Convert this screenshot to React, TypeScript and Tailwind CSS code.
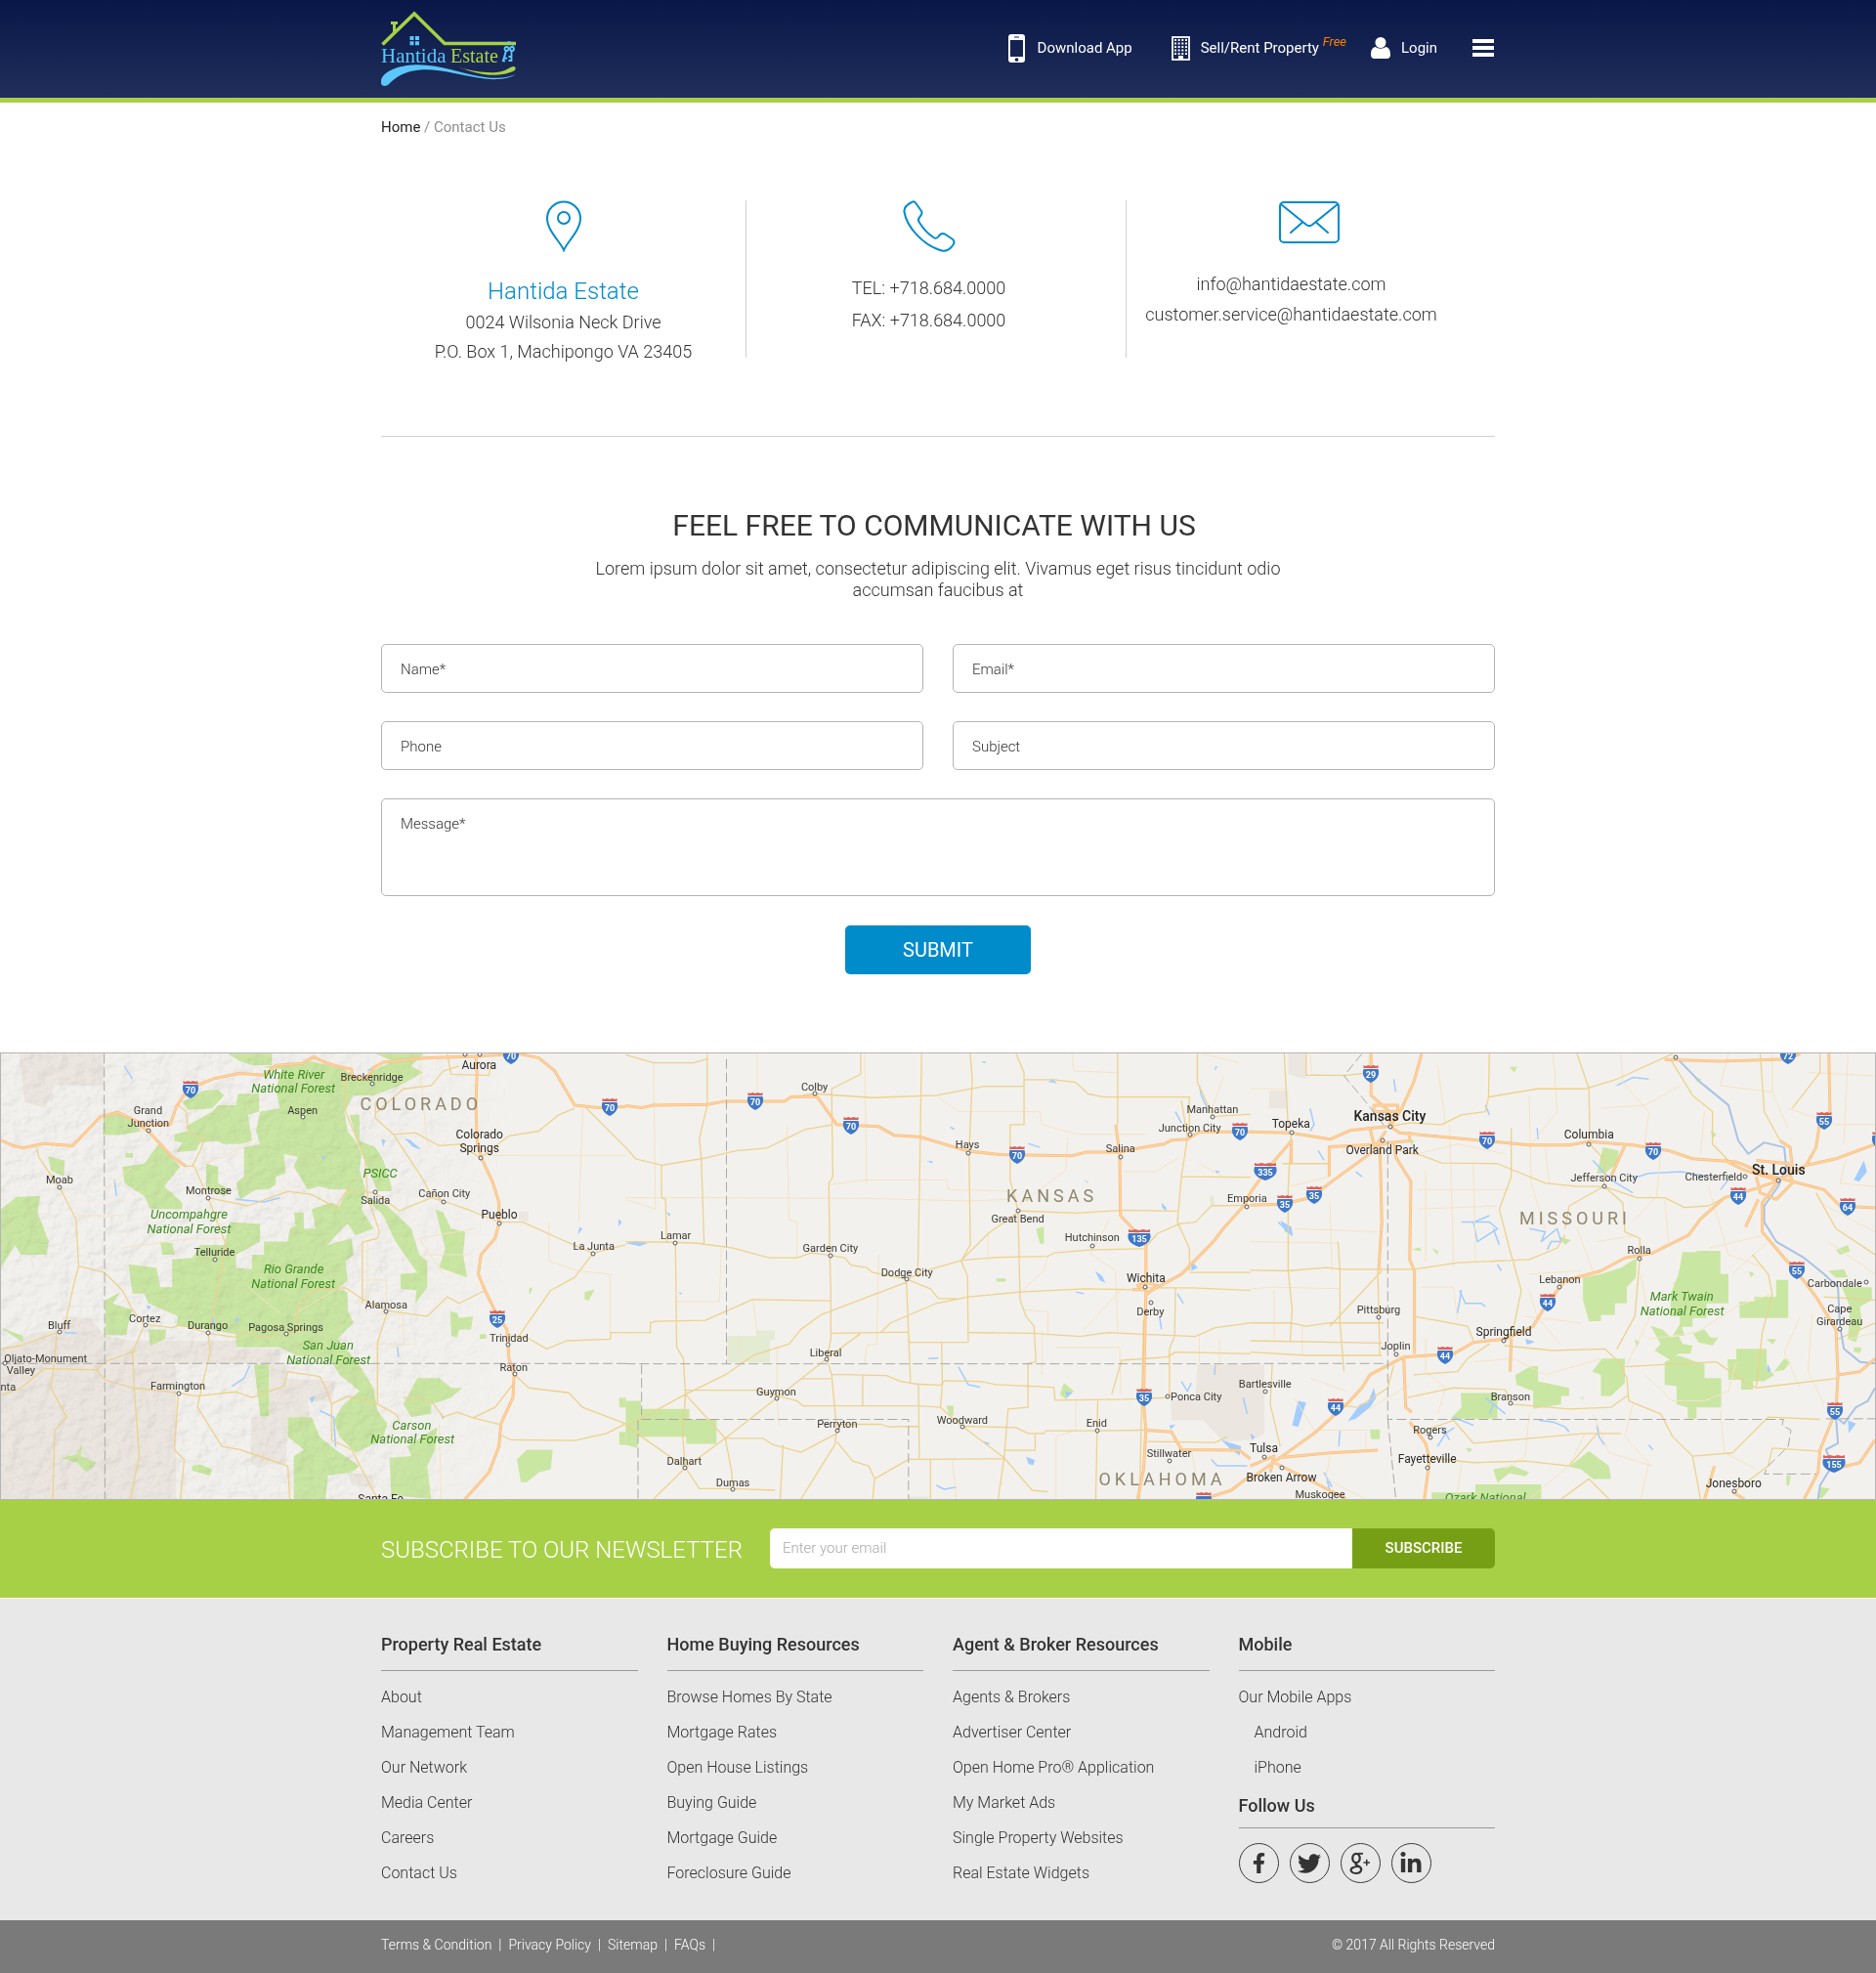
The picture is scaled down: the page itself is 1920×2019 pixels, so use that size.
import { useState } from 'react';
import type { FormEvent, ReactNode } from 'react';
import { FaFacebookF, FaLinkedinIn, FaTwitter } from 'react-icons/fa';

// ---------- Map data ----------

// Map units: three tiles side by side, each 1568 units wide
const TILE = 1568;
const MAP_TOP = 21;
const MAP_WIDTH = TILE * 3;
const MAP_HEIGHT = 1371;

interface TileShapes {
  tan: string;
  pale: string;
  green: string;
  water: string;
  lakes: string;
  faint: string;
  roads: string;
  highways: string;
  borders: string;
}

const tiles: TileShapes[] = [
  {
    tan: 'M0 930 L80 880 L150 870 L155 830 L225 835 L260 890 L330 905 L590 905 L590 930 L700 930 L700 975 L270 975 L440 980 L440 1392 L0 1392Z M675 978 L715 978 L715 1020 L840 1030 L830 1090 L770 1090 L775 1140 L720 1140 L715 1285 L628 1285 L628 1140 L675 1140Z M45 22 L258 22 L258 120 L135 120 L110 190 L60 170Z M870 1310 L930 1320 L940 1360 L880 1350Z M1300 507 h24 v30 h-24Z',
    pale: '',
    green:
      'M570 22 h110 v35 h-50 l-30 -12Z M655 62 L780 45 L860 70 L905 100 L930 75 L985 45 L940 22 L1060 22 L1030 60 L1060 80 L1000 120 L935 150 L885 150 L862 200 L870 260 L890 290 L905 330 L900 380 L915 440 L905 500 L935 560 L890 580 L870 545 L845 575 L820 610 L880 590 L885 640 L865 660 L870 720 L845 745 L870 755 L870 810 L885 850 L860 880 L845 900 L880 950 L905 990 L935 1050 L945 1120 L970 1160 L960 1200 L940 1220 L890 1250 L850 1200 L835 1150 L860 1100 L900 1060 L870 1030 L850 1010 L825 960 L740 950 L700 925 L590 925 L590 885 L520 870 L440 860 L445 830 L370 790 L360 760 L330 760 L320 670 L390 680 L400 740 L430 740 L430 655 L480 650 L500 610 L560 610 L575 540 L650 545 L650 600 L620 620 L590 640 L590 680 L630 685 L630 640 L660 640 L660 600 L720 600 L725 560 L740 550 L735 510 L760 510 L760 560 L790 560 L780 500 L830 480 L850 490 L870 440 L830 440 L800 430 L770 440 L735 370 L745 340 L710 330 L715 390 L690 400 L690 425 L670 440 L640 440 L600 470 L590 420 L610 400 L610 310 L650 300 L640 260 L650 200 L700 190 L690 130 L705 70Z M258 210 L290 198 L330 230 L352 260 L300 272 L255 272Z M465 245 L530 200 L545 180 L590 180 L595 145 L648 145 L648 200 L620 210 L630 290 L600 300 L560 300 L540 290 L500 295 L490 320 L440 325 L455 295 L435 290 L435 270 L470 260Z M455 170 L510 135 L545 132 L560 150 L530 190 L470 195Z M305 370 L360 360 L395 300 L450 370 L410 430 L455 480 L455 500 L375 500 L360 460 L310 420Z M515 360 L545 370 L545 420 L575 440 L560 460 L515 440Z M118 338 L160 350 L158 400 L125 380Z M40 462 L98 460 L92 510 L120 600 L115 640 L50 640 L35 610 L0 680 L0 500Z M875 210 h25 v80 l40 20 20 40 20 80 v15 h-35 l-20 -60 -30 -90Z M910 460 L970 490 L1030 560 L1050 640 L1070 660 L1070 740 L1040 790 L1043 750 L1003 745 L1003 700 L1045 695 L990 600 L960 520Z M1090 500 L1110 510 L1130 560 L1165 570 L1160 640 L1170 710 L1100 680 L1115 620Z M720 1140 L780 1140 L800 1200 L840 1240 L900 1290 L880 1310 L820 1320 L815 1392 L735 1392 L735 1260 L760 1240 L720 1200Z M1010 1100 L1045 1020 L1100 1020 L1130 1050 L1158 1050 L1130 1080 L1080 1100 L1080 1130 L1030 1140Z M1020 1230 L1095 1170 L1090 1240 L1070 1290 L1080 1392 L980 1380 L975 1265 L1030 1260Z M1295 1270 L1320 1240 L1385 1240 L1380 1300 L1350 1310 L1320 1340 L1305 1340Z M635 978 h38 v160 h-22Z M262 780 L300 755 L280 790 L330 810 L320 850 L315 888 L262 888Z M370 870 L415 870 L412 900 L375 920Z M480 1290 L500 1285 L530 1300 L525 1320 L480 1305Z M150 1265 L190 1255 L205 1220 L200 1260 L240 1280 L215 1310 L190 1280Z M1128 815 L1145 820 L1150 835 L1185 830 L1180 870 L1150 870 L1145 895 L1130 890Z M1465 755 l25 -8 -15 35 -10 -5Z M1325 745 l10 -5 -8 25Z M1552 1080 h16 v30 h-16Z M1552 1185 h16 v40 h-16Z M400 600 L430 605 L435 640 L405 640Z M0 865 L55 890 L55 910Z M313 328 h18 v14 h-18Z M1202 885 h16 v14 h-16Z',
    water:
      'M285 410 L290 460 M590 470 L660 478 L700 465 M580 1045 L610 1020 L625 980 M800 1120 L835 1140 L840 1230 M310 60 L330 100 M995 925 L998 955 M1110 1145 L1105 1130 M160 880 L190 882 M530 830 L535 870 M920 75 L940 60',
    lakes:
      'M955 283 l10 5 -6 20Z M1012 282 l15 5 28 30 -20 -8Z M590 830 l8 10 -8 12Z M775 1080 l15 -5 -10 22Z M1452 555 l8 5 -12 18Z M1550 530 l8 10 -8 14Z M365 795 l12 5 -8 10Z M805 335 l10 5 -8 10Z',
    faint:
      'M1200 335 H1568 M1375 540 V660 L1450 690 L1530 700 V880 M905 718 H967 V800 M260 440 L330 370 M920 600 V800 M940 825 H1010 V900 M1050 60 L1070 300 M1460 190 L1450 540 M190 520 L300 520 M300 620 L480 590 L560 590 M640 280 L560 340 L500 360 M1060 640 L1180 640 M1100 1160 L1105 1392 M940 915 H1040 M620 740 L700 820 M740 820 L850 740 M1190 560 L1050 590 L1110 700',
    roads:
      'M90 310 L95 340 L150 440 L188 530 L195 675 L185 720 L165 830 L160 870 M195 675 L260 695 L305 750 L330 810 L360 855 L330 940 L335 1060 L347 1260 L325 1392 M360 855 L430 865 L450 855 L520 882 L590 895 L610 878 L650 895 L715 885 L760 870 M520 882 L525 940 L500 1070 L493 1110 L555 1230 L600 1240 L720 1290 L725 1392 M460 368 L485 368 L520 465 L565 610 L550 700 L535 800 L520 882 M480 368 L500 320 L510 285 L470 260 L465 200 L445 180 M520 465 L580 480 L620 490 L720 445 L780 455 L840 495 L870 440 L940 450 L1000 505 L1080 465 L1110 475 L1180 505 L1250 540 L1310 540 L1400 590 L1485 635 M862 70 L865 200 L915 350 L920 460 L950 570 L945 590 L907 602 L907 790 M740 860 L745 800 L790 745 L865 742 L905 775 L970 812 L1070 830 L1120 770 L1150 790 L1215 750 M970 815 L945 910 L945 1100 M0 1072 L50 1050 L110 990 L240 995 L260 1025 L330 1050 L445 1065 L490 1075 L590 1062 L630 1080 L710 1045 L720 1000 L800 1015 L815 1050 L830 1100 L870 1075 L945 1100 L990 1130 L1000 1150 M0 930 L50 920 L140 880 L135 960 L125 1050 L165 1140 L135 1180 L130 1392 M445 1070 L435 1240 L460 1270 L450 1392 M240 995 L260 970 L340 935 M830 1100 L830 1210 L880 1240 L945 1392 M1290 1010 L1325 1050 L1425 1065 L1460 1110 L1568 1160 M1255 1195 L1280 1210 L1440 1212 L1520 1190 L1568 1160 M1288 1035 L1240 1110 L1185 1142 L1145 1125 L1110 1140 L1080 1090 L1010 1080 M1185 1142 L1250 1162 M1275 890 L1320 895 L1370 930 L1420 905 L1530 900 L1530 880 L1568 880 M1300 890 L1380 750 L1440 710 L1487 635 L1568 610 M1205 340 L1275 275 L1350 260 L1400 210 L1440 190 M1470 190 L1568 310 M940 170 L940 220 L985 270 L1040 265 L1100 305 L1150 300 L1200 340 M985 270 L1060 410 L1075 445 L1110 475 M940 205 L1010 130 L1080 120 L1110 75 L1150 60 M1120 22 L1130 85 L1225 88 L1230 50',
    highways:
      'M0 288 L30 305 L55 312 L108 298 L180 305 L250 215 L295 203 L345 232 L355 240 L425 240 L440 185 L470 130 L530 100 L600 82 L660 88 L690 58 L755 52 L785 32 L820 52 L850 62 L880 70 L882 95 L915 100 L935 65 L960 48 L1060 35 L1190 30 L1300 22 L1350 35 L1390 75 L1440 180 L1500 188 L1568 185 M1192 30 L1195 80 L1192 180 L1195 290 L1205 340 L1235 420 L1250 480 L1250 545 L1240 590 L1205 640 L1198 700 L1215 750 L1243 820 L1270 870 L1275 960 L1288 1010 L1285 1080 L1255 1160 L1250 1230 L1225 1310 L1165 1392 M345 240 L370 260 L430 340 L465 368',
    borders: 'M259 22 L261 1392 M0 975 H1568',
  },
  {
    tan: 'M1435 978 H1568 V1210 L1500 1215 L1450 1150 L1370 1150 L1368 1090 L1430 1080Z',
    pale: 'M255 890 L330 890 L330 873 H375 V900 L362 905 V972 H255Z M1465 460 l10 0 5 30 -12 0Z M710 1385 h50 v7 h-50Z',
    green:
      'M0 1090 H38 V1115 H160 V1147 H228 V1222 H152 V1200 H30 V1235 L0 1225Z M1030 560 l20 -5 v50 l-10 2Z M1100 1035 L1125 1060 L1105 1085 L1090 1070Z M805 1105 l18 0 v30 l-10 0Z M930 713 h24 v10 h-22Z M1000 470 l14 -4 -6 12Z',
    water:
      'M835 985 L860 1040 L890 1048 M1440 120 L1445 150 L1460 190 M1380 200 L1395 235 M1395 1030 L1410 1060 L1420 1035 M1385 760 L1400 790 M1340 830 L1345 870 M1130 755 L1150 760 M1010 298 L1040 310 M815 248 L825 254 M760 960 L785 958 M1480 980 L1478 1010 M1550 1080 L1560 1130 M780 1350 L800 1362 L830 1355 M1470 1270 L1485 1290 L1560 1290',
    lakes:
      'M0 605 L30 598 L55 605 L35 614Z M1060 110 l12 -10 12 15 -12 -5Z M1178 690 l18 15 8 22 -14 -8Z M1345 480 l12 15 0 10 -10 -8Z M1480 60 l6 2 -8 12Z M1005 1262 l22 10 -4 16 -12 -4Z M1365 1165 l15 -2 -12 15Z M1495 1210 l50 20 -4 28 -25 -22Z M1150 408 l10 8 0 6Z M755 352 l14 0 2 8Z M102 507 l12 10 -6 4Z M1420 660 l16 20 -16 10Z M1480 380 l12 4 -8 8Z M895 1213 l20 8 -8 6Z M133 755 l10 3 -6 5Z M893 46 l12 0 -4 6Z M1103 1060 l18 5 -14 14Z',
    faint:
      'M70 50 L75 500 L0 470 M0 465 L240 465 L640 468 L860 475 L960 470 M330 22 V170 M405 240 L410 530 L430 540 L430 650 M600 22 L605 420 M320 780 L330 890 M510 425 L600 410 L805 410 L810 440 L960 445 M240 620 L235 785 L128 785 M780 150 L835 200 L1040 200 L1045 240 L1135 270 L1310 270 M1120 22 L1125 75 L1230 80 M1110 280 L1105 380 L985 490 M910 575 V645 M1170 640 L1230 690 L1235 880 M1000 810 L1060 815 L1060 890 M1150 870 L1250 740 M1060 645 L1050 690 L995 750 M1250 385 L1330 385 L1390 340 M380 920 V1080 L385 1168 M635 640 L630 915 L605 920 L600 975 M285 885 L290 970 M1045 880 V1010 M1080 925 H1240 L1243 1070 M1450 22 L1540 50 M1500 90 L1470 200 M1440 360 L1500 400 M1440 890 V975 M1130 1088 V1180 L1080 1200 L1080 1392 M820 1270 L830 1392 M1420 1240 L1430 1310 M1215 530 L1165 640 M1490 900 V1000',
    roads:
      'M0 880 L62 880 L62 850 L75 845 L200 842 L318 778 L515 782 M0 310 L25 345 L90 365 L190 345 L280 320 L355 312 L450 255 L520 240 M90 365 V465 L100 470 L103 600 M205 22 L205 180 L185 282 L190 345 L197 610 M0 600 L125 602 L180 605 L270 620 L360 650 L430 650 L465 635 L515 642 L550 650 L565 672 L605 680 L620 695 L705 715 L765 745 L785 775 L830 775 M125 602 L128 925 L145 960 L150 1070 L143 1200 L150 1295 M445 150 L475 145 L620 157 L780 150 L900 122 L1000 122 M590 22 L590 85 L517 130 L520 400 L510 420 L512 620 L515 760 L515 900 L505 960 L517 1010 L530 1180 L525 1225 L440 1392 M743 22 L738 400 L733 710 M865 22 L870 100 L862 330 L865 610 L842 660 L858 705 L860 910 M980 22 L1000 80 L1000 240 L965 240 L965 410 L985 505 L990 780 L1005 830 L1025 860 L1030 970 L1010 975 L1010 1110 L960 1115 L950 1265 L935 1392 M1000 102 L1075 102 L1130 110 L1160 145 L1200 155 L1415 155 L1415 270 M1235 22 V240 M985 505 L1130 512 L1250 503 L1385 506 M985 510 L910 575 L842 658 M705 715 L765 685 L845 657 L935 648 L1060 645 L1075 635 L1170 625 L1300 622 M705 725 L490 825 L440 870 L410 915 L320 950 L250 1010 L150 1070 L0 1170 M640 880 L665 850 L780 790 L860 770 L990 755 L1150 745 L1300 748 M515 882 L710 878 L712 910 L858 910 M705 725 L715 1035 M793 910 L795 1040 L790 1110 M858 880 L1020 882 L1140 892 L1210 880 L1300 885 L1430 892 L1480 865 L1568 850 M1300 742 L1420 742 L1568 750 M505 960 L380 1080 L250 1205 L150 1295 L70 1392 M505 960 L590 882 M150 1057 L330 1057 L430 1090 L445 1105 L735 1105 L790 1110 L845 1168 L950 1265 L1020 1365 L1060 1370 M517 1008 L655 1012 L690 1030 L730 1038 L790 1042 L800 1028 L890 1030 L930 1040 L1075 1048 L1078 1088 L1250 1085 L1360 1080 M440 1022 H515 M595 1008 V1105 M150 1070 L250 1205 L345 1205 L370 1225 L440 1248 L530 1190 M250 1205 L265 1300 L270 1360 M0 1165 L40 1200 L150 1295 L185 1360 L270 1360 L375 1365 M530 1215 L570 1275 L610 1290 L625 1330 L620 1392 M395 1225 L388 1392 M625 1330 L710 1270 L950 1268 M735 1040 L737 1270 M765 1270 V1392 M530 1162 L640 1162 L660 1170 L735 1168 M845 1168 L980 1172 L1010 1190 L1050 1190 L1055 1182 L1183 1182 L1306 1180 M1028 1190 V1242 H950 M1185 1090 L1180 1392 M1310 610 L1335 575 L1390 545 L1430 540 L1470 490 L1568 488 M1395 165 L1410 280 L1395 400 L1568 402 M1395 400 L1385 540 L1415 620 L1415 690 M1415 695 H1568 M1380 740 L1378 890 L1365 930 L1365 1080 M1300 840 L1290 1392 M1220 1070 L1245 965 L1360 955 L1380 940 L1568 945 M0 25 L70 50 L170 50 L205 38 M1435 22 L1435 110 L1475 215 L1568 208 M1310 1215 L1480 1218 L1510 1200',
    highways:
      'M0 182 L40 188 L70 180 L205 178 L250 168 L400 168 L415 155 L480 153 L530 240 L635 246 L675 273 L740 278 L860 322 L940 332 L1120 336 L1155 325 L1240 325 L1290 312 L1350 300 L1370 288 L1410 285 L1440 262 L1568 262 M1230 240 L1240 330 L1242 520 L1285 575 L1306 610 L1306 750 L1303 900 L1300 1100 L1306 1180 L1300 1300 L1285 1392 M1305 1180 L1370 1185 L1395 1240 L1540 1242 L1568 1268 M1306 760 L1395 700 L1475 600 L1500 560 L1555 485 L1568 450 M1272 748 H1300 L1285 735 L1305 725 L1335 735 L1306 765 M1450 1392 L1520 1365 L1568 1320',
    borders: 'M253 38 V975 M0 976 H1568 M40 978 V1147 H710 V1392 M31 1150 V1392',
  },
  {
    tan: 'M0 978 H35 V1190 L0 1215Z M47 135 H95 V190 H47Z M95 22 H140 V100 L95 85Z',
    pale: 'M1060 725 l25 -8 0 25 -20 0Z M825 1080 l14 -6 -4 16Z',
    green:
      'M1085 632 H1120 V628 H1180 V700 H1200 V790 H1145 V835 H1110 V862 H1078 V830 H1055 V760 L1075 700Z M880 700 L930 680 L970 650 L968 710 L945 740 V790 H915 V825 H880 V845 H850 L835 780 V710Z M1320 718 H1350 V835 H1228 V785 H1265 V770 H1320Z M1040 970 L1075 950 L1130 975 H1140 V1020 H1182 V1110 H1120 V1145 H1098 V1110 L1070 1100 V1045 L1040 1040Z M1198 962 H1220 V930 H1296 V985 L1315 1010 L1290 1030 H1262 V1055 H1232 V1025 H1200Z M883 960 H940 V1035 L905 1075 H880 V1010 L858 1000Z M665 1010 L705 983 H722 V1030 L800 1050 V1075 H780 V1100 L710 1115 V1060 L668 1040Z M528 1066 H620 V1145 H502 L530 1110Z M565 1347 H730 V1392 H455 V1372 H565Z M800 1292 L850 1245 L900 1290 L905 1330 L860 1330 L830 1300Z M885 310 L925 320 L920 360 L890 390 L870 390Z M1005 860 l30 10 20 25 20 -5 10 25 25 5 -5 25 -30 0 -20 20 -40 -30 15 -20Z M1110 880 l30 -10 15 25 20 0 -15 25 -35 -10Z M1060 890 l20 -40 10 40Z M1485 740 H1560 V780 L1530 800 L1535 850 L1520 910 L1500 900 L1505 800Z M1450 690 l40 -5 10 25 -30 0Z M1470 625 l30 -15 5 20 -25 10Z M610 1300 L660 1290 L700 1310 L690 1322 L650 1312 L620 1342Z M300 1178 h25 v30 h-22Z M1340 960 l15 10 -15 25 -25 5Z M405 625 l20 -8 5 12Z M455 620 l18 10 -4 10Z M1155 258 l15 12 -10 14Z M650 62 l20 0 -8 18Z M775 585 l30 10 -15 15Z M1115 95 l18 6 -10 10Z M1430 1355 l25 5 -20 30 -12 -5Z M1515 925 l20 0 -5 18 -15 -4Z M1345 1320 l12 0 -5 30 -6 0Z M540 1235 l18 2 -8 12Z M965 900 l12 10 -8 15Z M1250 690 l15 8 -8 12Z M1295 900 l25 0 -8 16Z M400 285 l12 5 -8 15Z',
    water:
      'M860 350 L905 410 L960 450 M960 405 L1000 390 L1080 385 L1150 400 M700 560 L740 570 L730 600 L770 560 L780 600 L755 600 L745 625 M530 540 L600 540 L620 560 L570 600 L560 540 L600 520 M610 560 L625 610 M525 750 L540 790 L580 790 L590 800 M520 820 L530 750 M590 1080 L640 1130 M600 1130 L610 1100 M725 1150 L760 1155 L790 1170 L800 1185 M870 1165 L875 1200 L888 1225 M470 1230 L490 1190 L512 1172 M500 1210 L480 1170 M920 120 L960 95 L1000 100 M150 190 L160 240 L150 260 M360 100 L365 140 M170 320 L185 350 M265 385 L280 400 M70 540 L105 580 M510 1140 L560 1165 M620 670 L630 690 M185 1310 L205 1355 M225 1180 L222 1230 M190 1320 L200 1370 M590 180 L600 210 M720 250 L722 285 M1180 440 L1200 410 M1000 1225 L1010 1240',
    lakes:
      'M245 1152 L275 1100 L295 1095 L310 1050 L316 1080 L300 1110 L265 1145Z M120 1090 L140 1095 L120 1170 L105 1165Z M1540 350 L1548 385 L1528 415 L1515 410Z M75 535 l28 20 4 28 -20 -15Z M1298 975 l8 20 -8 10Z M690 900 l25 8 -20 10Z M1500 1150 l20 10 -18 30Z M0 1190 l12 10 -8 10Z',
    faint:
      'M0 130 H90 M150 22 L155 85 L240 90 M0 600 L220 605 M0 745 L60 740 L225 745 M60 750 L60 900 M200 480 L205 690 M440 380 L440 660 M500 240 L510 680 M560 360 L565 660 M420 500 L620 490 M420 440 L650 440 M700 150 L705 420 L740 560 M760 22 L770 200 L700 310 M470 60 L490 240 M930 22 L935 110 L1000 200 L990 300 M1080 120 L990 180 L880 190 M1200 22 L1180 120 L1310 140 L1310 22 M1310 140 L1350 250 M1400 80 L1568 90 M1500 22 L1490 300 M1350 190 L1470 240 L1568 240 M1140 200 L1130 330 M1030 320 L1020 460 L960 540 M1040 470 L1050 600 L1010 640 M1150 430 L1200 640 L1290 680 M1290 580 L1150 620 M870 600 L970 580 M820 560 L860 690 M700 700 L830 690 M690 830 L830 850 M700 750 L720 830 L780 920 M430 740 L510 740 L520 840 M440 900 L440 1000 L490 1050 L470 1130 M560 970 L660 960 L740 1010 L880 960 M980 700 L1000 840 L945 980 M1000 900 L1120 880 L1220 800 L1310 760 M990 1010 L1060 1090 L1140 1090 L1200 1060 L1220 970 M1380 830 L1340 940 L1380 1050 M1410 820 L1400 1000 L1440 1100 M1180 1120 L1190 1250 L1270 1300 M960 1100 L940 1200 L1000 1280 L980 1392 M840 1190 L800 1290 L700 1392 M700 1130 L690 1260 L640 1300 M530 1280 L520 1370 M860 1130 L900 1250 L1010 1290 M130 860 L130 950 M150 1020 L240 1060 M110 1080 L160 1180 L290 1180 L290 1240 M200 1260 L190 1330 L290 1392 M290 1120 L400 1040 M1500 320 L1480 420 L1568 430 M1430 480 L1568 570 M1450 600 L1568 700 M1300 600 L1210 700 M1500 900 L1568 880 M100 430 L200 400 M110 560 L320 570 M230 330 L240 300 M420 330 L520 300 L640 330 M740 300 L750 420 M300 22 L290 100',
    roads:
      'M85 22 L95 250 M140 22 V88 L240 88 L303 80 M103 265 L95 430 L95 690 L105 810 L100 905 M0 688 L95 690 L190 680 L230 685 L412 685 L520 665 L700 655 L770 620 L790 580 M600 22 L598 155 L720 130 L840 130 L920 100 L1060 22 M350 245 L400 235 L480 240 L530 210 L590 200 L598 155 M370 320 L430 335 L480 358 L620 360 L740 420 L820 430 L888 430 L970 465 L1040 465 L1090 495 L1150 490 L1190 465 M820 22 L850 130 L852 300 L890 350 L888 430 M888 430 L935 480 L940 570 L978 590 L978 650 L965 830 L920 930 M888 430 L800 490 L790 560 M1055 40 L1110 150 L1160 200 L1160 300 L1200 350 M655 250 L655 400 L625 500 L650 620 L680 750 L660 870 L637 905 M412 830 L500 850 L545 860 L560 905 M637 920 L760 935 L890 930 L925 970 L945 1020 L950 1090 L1030 1130 L1060 1200 L1110 1260 L1130 1392 M942 985 L1080 975 L1170 970 L1240 1030 L1270 1050 L1475 1020 M1270 1045 L1285 880 L1310 760 L1300 700 L1260 640 M410 1010 L520 1000 L545 960 L600 915 M395 1080 L470 1060 L510 1050 L640 1055 L655 1100 L800 1115 L905 1110 L950 1070 M440 1180 L510 1150 L560 1220 L660 1210 L840 1190 L930 1190 M450 1265 L560 1280 L690 1275 L800 1290 L870 1190 M0 850 L100 850 L140 860 L200 850 L335 850 M0 905 L330 912 M0 940 L140 950 L330 950 M220 600 L225 690 L225 850 L235 1000 M55 975 L50 1100 L75 1230 M320 690 L325 950 M200 1100 L270 1110 L345 1050 L360 980 M1110 1260 L1210 1250 L1300 1140 L1430 1147 M1213 1370 L1300 1290 L1310 1235 L1430 1245 M1430 22 L1430 80 L1360 190 M1280 22 L1290 200 L1330 290 M1420 450 L1470 560 L1568 640 M1440 770 L1568 780 M1475 900 L1568 850 M80 360 L200 360 M200 860 L330 690 M780 1392 L850 1330 L900 1392',
    highways:
      'M0 262 L100 265 L200 285 L250 258 L350 245 L375 265 L530 283 L700 303 L800 303 L850 292 L960 303 L1050 320 L1110 345 L1220 355 L1300 395 L1360 415 L1440 440 L1480 490 L1568 496 M0 488 L80 485 L150 465 L210 410 L300 330 L340 260 M0 450 L40 380 L103 290 V360 M303 22 L303 150 L350 200 L350 245 M430 22 L410 110 L380 190 L355 240 M310 180 H370 V200 H310Z M300 250 L310 300 L400 290 L400 262 M198 400 V308 L340 300 M360 290 L365 340 L403 415 L400 655 L412 690 L412 945 M325 290 L330 540 L322 690 M0 1330 L80 1260 L160 1190 L250 1090 L280 1050 L300 1010 L385 955 L510 945 L560 910 L640 900 L710 860 L745 790 L790 720 L880 690 L940 650 L1010 635 L1100 580 L1130 530 L1190 465 L1260 440 L1326 412 L1285 480 L1285 570 L1340 650 L1370 690 L1420 770 L1470 870 L1475 1010 L1470 1120 L1430 1240 L1425 1310 L1390 1392 M1395 365 L1420 310 L1430 230 L1455 200 L1452 22 M1326 412 L1395 365 L1470 345 L1568 300 M1190 350 L1240 380 L1326 412 M1270 400 L1280 450 L1320 470 L1360 420 L1350 360 L1270 350 M385 955 L390 1110 L405 1125 M400 1155 L440 1220 L450 1270 L437 1392 M70 1265 L200 1250 L320 1242 M0 1290 L60 1260 L50 1310 M60 1280 L110 1310 L160 1340 L240 1392 M1040 40 L1180 45 L1350 38 L1380 22 M1475 1010 L1530 1000 L1568 960 M1480 1295 L1530 1280 L1568 1210 M1165 1290 L1140 1392 M655 900 L652 1000 M1330 290 L1355 310 L1360 370 M1275 470 L1243 555 M905 400 L940 305 M1210 1370 L1240 1392',
    borders:
      'M0 975 H345 M345 290 V1147 H1338 L1335 1165 L1357 1180 L1350 1230 L1300 1290 L1290 1315 H1420 M345 1147 L365 1392 M280 22 L235 90 L290 170 L340 250 M1445 1145 H1568',
  },
];

const river =
  'M1070 35 L1130 110 L1200 180 L1225 290 L1250 330 L1290 295 L1340 310 L1345 370 L1325 430 L1290 490 L1290 540 L1320 600 L1390 650 L1440 700 L1475 740 L1480 860 L1490 930 L1530 970 L1568 975 M1568 1050 L1550 1090 L1520 1110 L1490 1160 L1470 1140 L1475 1220 L1445 1240 L1460 1290 L1430 1350 L1425 1392';

type LabelKind = 'town' | 'city' | 'metro' | 'forest' | 'state';

// kind, tile, x, y, text
const labels: [LabelKind, number, number, number, string][] = [
  ['city', 0, 1200, 56, 'Aurora'],
  ['town', 0, 931, 92, 'Breckenridge'],
  ['town', 0, 757, 194, 'Aspen'],
  ['town', 0, 369, 194, 'Grand'],
  ['town', 0, 370, 233, 'Junction'],
  ['city', 0, 1201, 272, 'Colorado'],
  ['city', 0, 1201, 314, 'Springs'],
  ['town', 0, 147, 410, 'Moab'],
  ['town', 0, 521, 442, 'Montrose'],
  ['town', 0, 940, 473, 'Salida'],
  ['town', 0, 1113, 452, 'Cañon City'],
  ['city', 0, 1251, 518, 'Pueblo'],
  ['town', 0, 1488, 613, 'La Junta'],
  ['town', 0, 536, 631, 'Telluride'],
  ['town', 0, 967, 793, 'Alamosa'],
  ['town', 0, 361, 835, 'Cortez'],
  ['town', 0, 519, 857, 'Durango'],
  ['town', 0, 715, 863, 'Pagosa Springs'],
  ['town', 0, 146, 857, 'Bluff'],
  ['town', 0, 1275, 895, 'Trinidad'],
  ['town', 0, 112, 958, 'Oljato-Monument'],
  ['town', 0, 50, 995, 'Valley'],
  ['town', 0, 18, 1046, 'nta'],
  ['town', 0, 444, 1043, 'Farmington'],
  ['town', 0, 1287, 986, 'Raton'],
  ['city', 0, 953, 1392, 'Santa Fe'],
  ['forest', 0, 735, 83, 'White River'],
  ['forest', 0, 734, 127, 'National Forest'],
  ['forest', 0, 952, 388, 'PSICC'],
  ['forest', 0, 472, 515, 'Uncompahgre'],
  ['forest', 0, 472, 559, 'National Forest'],
  ['forest', 0, 735, 683, 'Rio Grande'],
  ['forest', 0, 734, 727, 'National Forest'],
  ['forest', 0, 821, 917, 'San Juan'],
  ['forest', 0, 822, 961, 'National Forest'],
  ['forest', 0, 1031, 1163, 'Carson'],
  ['forest', 0, 1033, 1207, 'National Forest'],
  ['state', 0, 1054, 178, 'COLORADO'],
  ['town', 1, 474, 122, 'Colby'],
  ['town', 1, 1473, 191, 'Manhattan'],
  ['town', 1, 1416, 248, 'Junction City'],
  ['town', 1, 858, 302, 'Hays'],
  ['town', 1, 1242, 314, 'Salina'],
  ['town', 1, 1560, 467, 'Emporia'],
  ['town', 1, 984, 529, 'Great Bend'],
  ['town', 1, 126, 581, 'Lamar'],
  ['town', 1, 1171, 587, 'Hutchinson'],
  ['town', 1, 514, 620, 'Garden City'],
  ['town', 1, 706, 695, 'Dodge City'],
  ['city', 1, 1306, 713, 'Wichita'],
  ['town', 1, 1317, 815, 'Derby'],
  ['town', 1, 502, 941, 'Liberal'],
  ['town', 1, 378, 1061, 'Guymon'],
  ['town', 1, 1432, 1076, 'Ponca City'],
  ['town', 1, 531, 1160, 'Perryton'],
  ['town', 1, 845, 1148, 'Woodward'],
  ['town', 1, 1182, 1157, 'Enid'],
  ['town', 1, 1364, 1250, 'Stillwater'],
  ['town', 1, 147, 1274, 'Dalhart'],
  ['town', 1, 269, 1340, 'Dumas'],
  ['state', 1, 1070, 460, 'KANSAS'],
  ['state', 1, 1347, 1333, 'OKLAHOMA'],
  ['metro', 2, 350, 214, 'Kansas City'],
  ['city', 2, 102, 236, 'Topeka'],
  ['city', 2, 331, 320, 'Overland Park'],
  ['city', 2, 850, 272, 'Columbia'],
  ['town', 2, 888, 404, 'Jefferson City'],
  ['town', 2, 1163, 401, 'Chesterfield'],
  ['metro', 2, 1326, 379, 'St. Louis'],
  ['town', 2, 976, 626, 'Rolla'],
  ['town', 2, 777, 716, 'Lebanon'],
  ['town', 2, 1467, 727, 'Carbondale'],
  ['town', 2, 322, 809, 'Pittsburg'],
  ['town', 2, 1479, 806, 'Cape'],
  ['town', 2, 1479, 845, 'Girardeau'],
  ['city', 2, 636, 878, 'Springfield'],
  ['town', 2, 365, 920, 'Joplin'],
  ['town', 2, 37, 1037, 'Bartlesville'],
  ['town', 2, 653, 1076, 'Branson'],
  ['town', 2, 451, 1178, 'Rogers'],
  ['city', 2, 34, 1235, 'Tulsa'],
  ['city', 2, 444, 1268, 'Fayetteville'],
  ['city', 2, 78, 1325, 'Broken Arrow'],
  ['town', 2, 175, 1376, 'Muskogee'],
  ['city', 2, 1213, 1343, 'Jonesboro'],
  ['forest', 2, 1083, 767, 'Mark Twain'],
  ['forest', 2, 1084, 811, 'National Forest'],
  ['forest', 2, 590, 1386, 'Ozark National'],
  ['state', 2, 815, 529, 'MISSOURI'],
];

const labelStyles: Record<LabelKind, string> = {
  town: 'text-[11px] text-[#3c3934]',
  city: 'text-xs text-[#2a2a2a]',
  metro: 'text-sm font-medium text-[#222]',
  forest: 'text-[13px] text-[#3d8b1f] italic',
  state: 'text-lg text-[#8f866f] tracking-[4px]',
};

// tile, x, y
const townDots: [number, number, number][] = [
  [0, 1165, 25], [0, 1201, 25], [0, 931, 114], [0, 757, 216], [0, 371, 259],
  [0, 1203, 342], [0, 147, 432], [0, 521, 465], [0, 940, 447], [0, 1112, 477],
  [0, 1251, 545], [0, 1487, 636], [0, 536, 654], [0, 967, 816], [0, 362, 858],
  [0, 519, 882], [0, 715, 885], [0, 147, 879], [0, 1274, 918], [0, 9, 974],
  [0, 446, 1068], [0, 1289, 1008], [1, 475, 144], [1, 1474, 217], [1, 1416, 272],
  [1, 860, 327], [1, 1243, 341], [1, 1560, 492], [1, 985, 504], [1, 125, 603],
  [1, 1171, 612], [1, 515, 642], [1, 706, 717], [1, 1305, 741], [1, 1318, 789],
  [1, 505, 963], [1, 380, 1083], [1, 1360, 1077], [1, 532, 1182], [1, 845, 1170],
  [1, 1183, 1182], [1, 1366, 1276], [1, 149, 1296], [1, 269, 1362], [2, 351, 247],
  [2, 103, 264], [2, 331, 288], [2, 850, 300], [2, 888, 431], [2, 1243, 400],
  [2, 1326, 412], [2, 978, 651], [2, 777, 741], [2, 1545, 726], [2, 323, 834],
  [2, 1480, 870], [2, 637, 906], [2, 366, 946], [2, 37, 1062], [2, 654, 1098],
  [2, 452, 1204], [2, 34, 1263], [2, 445, 1295], [2, 79, 1295], [2, 1214, 1369],
  [2, 1068, 33],
];

// tile, x, y, route number
const shields: [number, number, number, string][] = [
  [0, 475, 132, '70'], [0, 1280, 26, '70'], [0, 1528, 186, '70'], [0, 1247, 838, '25'],
  [1, 325, 168, '70'], [1, 566, 243, '70'], [1, 982, 333, '70'], [1, 1541, 261, '70'],
  [1, 1290, 588, '135'], [1, 1301, 1080, '35'], [1, 1450, 1397, ''],
  [2, 303, 84, '29'], [2, 595, 288, '70'], [2, 1011, 321, '70'], [2, 1440, 228, '55'],
  [2, 38, 384, '335'], [2, 161, 456, '35'], [2, 86, 483, '35'], [2, 1225, 459, '44'],
  [2, 1499, 492, '64'], [2, 1372, 687, '55'], [2, 747, 789, '44'], [2, 490, 951, '44'],
  [2, 215, 1109, '44'], [2, 1467, 1122, '55'], [2, 1466, 1284, '155'], [2, 1350, 28, '72'],
  [2, 1580, 288, ''],
];

const place = (tile: number, x: number, y: number) => ({
  left: `${((tile * TILE + x) / MAP_WIDTH) * 100}%`,
  top: `${((y - MAP_TOP) / MAP_HEIGHT) * 100}%`,
});

// ---------- Page data ----------

const footerColumns = [
  {
    title: 'Property Real Estate',
    links: ['About', 'Management Team', 'Our Network', 'Media Center', 'Careers', 'Contact Us'],
  },
  {
    title: 'Home Buying Resources',
    links: [
      'Browse Homes By State',
      'Mortgage Rates',
      'Open House Listings',
      'Buying Guide',
      'Mortgage Guide',
      'Foreclosure Guide',
    ],
  },
  {
    title: 'Agent & Broker Resources',
    links: [
      'Agents & Brokers',
      'Advertiser Center',
      'Open Home Pro® Application',
      'My Market Ads',
      'Single Property Websites',
      'Real Estate Widgets',
    ],
  },
];

const legalLinks = ['Terms & Condition', 'Privacy Policy', 'Sitemap', 'FAQs'];

const container = 'mx-auto w-full max-w-[1140px]';

// ---------- Icons ----------

function Logo() {
  return (
    <svg width="138" height="80" viewBox="390 10 138 80" role="img" aria-label="Hantida Estate">
      <path d="M391.500 45.500 L424 14 L455 44.500 H528" fill="none" stroke="#a8d046" strokeWidth="3.600" />
      <path d="M400 23.500 h7 M403.500 24 v10" fill="none" stroke="#a8d046" strokeWidth="3" />
      <path d="M419.500 37 h4 v4 h-4Z M425 37 h4 v4 h-4Z M419.500 42.300 h4 v4 h-4Z M425 42.300 h4 v4 h-4Z" fill="#5bc6fa" />
      <text x="390" y="64" fontSize="21" fill="#5bc6fa" fontFamily="'Liberation Serif', serif">
        Hantida
      </text>
      <text x="461" y="64" fontSize="20" fill="#a8d046" fontFamily="'Liberation Serif', serif">
        Estate
      </text>
      <g fill="none" stroke="#5bc6fa">
        <path d="M518 44 c3 -3 7 -1 7 4" strokeWidth="1" />
        <circle cx="518.500" cy="50" r="2" strokeWidth="1.800" />
        <path d="M518 52 L515 62 M516 59 l3 1 M514 62 l3 0.500" strokeWidth="2" />
        <circle cx="524" cy="50" r="2" strokeWidth="1.800" />
        <path d="M523.500 52 v11 M523.500 58 h-3 M523.500 62 h-3" strokeWidth="1.800" />
      </g>
      <path
        d="M390 82 C392 75 402 68 422 66.500 C450 65 470 76 500 79.500 C512 80.500 521 79 528 76 C520 81 508 82 496 80.500 C470 77 450 70 430 71.500 C414 73 406 78 397 87 C393 89 389 88 390 82Z"
        fill="#5bc6fa"
      />
      <path
        d="M466 68 C480 72 496 75 508 74 C518 73 521 69 525 68 C529 68 528 72 525 73 C517 77 500 78 490 75 C480 73 474 70 466 68Z"
        fill="#a8d046"
      />
    </svg>
  );
}

function PhoneDeviceIcon() {
  return (
    <svg width="17" height="29" viewBox="0 0 17 29" aria-hidden="true">
      <path
        fill="#fff"
        fillRule="evenodd"
        d="M3 0 H14 a3 3 0 0 1 3 3 V26 a3 3 0 0 1 -3 3 H3 a3 3 0 0 1 -3 -3 V3 a3 3 0 0 1 3 -3Z M2 6 V23 H15 V6Z M6 2.600 V3.600 H11 V2.600Z M8.500 24.200 a1.800 1.800 0 1 0 0.010 0Z"
      />
    </svg>
  );
}

function BuildingIcon() {
  const rows = [4, 7.500, 11, 14.500, 18];
  const cols = [4, 7.600, 11.300, 15];
  return (
    <svg width="19" height="25" viewBox="0 0 19 25" aria-hidden="true">
      <rect x="1" y="1" width="17" height="23" fill="none" stroke="#fff" strokeWidth="1.800" />
      {rows.map((y) =>
        cols.map((x) => (
          <rect key={`${x}-${y}`} x={x - 1} y={y - 1} width="2" height="2" fill="#fff" />
        ))
      )}
      <rect x="7" y="20" width="5" height="4" fill="#fff" />
    </svg>
  );
}

function UserIcon() {
  return (
    <svg width="20" height="22" viewBox="0 0 20 22" aria-hidden="true" fill="#fff">
      <circle cx="10" cy="5.500" r="5.500" />
      <path d="M5 10 C7 12.300 13 12.300 15 10 C18.500 10.500 20 13.500 20 18 C20 20.500 18.500 22 16.500 22 H3.500 C1.500 22 0 20.500 0 18 C0 13.500 1.500 10.500 5 10Z" />
    </svg>
  );
}

function PinIcon() {
  return (
    <svg width="38" height="53" viewBox="0 0 38 53" fill="none" stroke="#008bcb" strokeWidth="2" aria-hidden="true">
      <path d="M19 51 C16 43 2 31 2 18.500 A17 17 0 0 1 36 18.500 C36 31 22 43 19 51Z" />
      <circle cx="19" cy="18" r="6" />
    </svg>
  );
}

function HandsetIcon() {
  return (
    <svg width="54" height="53" viewBox="0 0 54 53" fill="none" stroke="#008bcb" strokeWidth="2" strokeLinejoin="round" aria-hidden="true">
      <path d="M9 2 C10.500 1 12 1 13 2.500 L19 11 C20.500 13.500 19.500 15 17 17.500 C15 19.500 16 21 17.500 23.500 C21 29 26 34.500 31.500 38 C33.500 39.200 35 39 36.500 37 C38 34.500 40 33 43 34.500 L50.500 39.500 C53 41 53 43 51.500 45.500 C48 51 44 53 38 51 C20 45 4 27 1.500 12 C1 8 4 4.500 9 2Z" />
    </svg>
  );
}

function EnvelopeIcon() {
  return (
    <svg width="62" height="43" viewBox="0 0 62 43" fill="none" stroke="#008bcb" strokeWidth="2" strokeLinecap="round" aria-hidden="true">
      <rect x="1" y="1" width="60" height="41" rx="4" />
      <path d="M2 3 L28 24 C30 25.500 32 25.500 34 24 L60 3 M24 21.500 L12 32 M38 21.500 L50 32" />
    </svg>
  );
}

function GooglePlusIcon() {
  return (
    <svg width="22" height="26" viewBox="0 0 22 26" fill="none" stroke="currentColor" aria-hidden="true">
      <ellipse cx="7" cy="7.500" rx="3.700" ry="4.700" strokeWidth="2.300" />
      <path d="M9 2.800 H14" strokeWidth="1.800" />
      <path d="M8 12 C5 13.500 7 14.500 9 15.500 C15 18.500 11.500 23 7 23 C2 23 0 19.500 3 17.500 C4.500 16.500 7 16 9 16" strokeWidth="2.200" />
      <path d="M14.500 12 H21 M17.750 8.750 V15.250" strokeWidth="1.500" />
    </svg>
  );
}

// ---------- Sections ----------

function Header() {
  return (
    <header className="border-b-[5px] border-[#a8d046] bg-linear-to-b from-[#081748] to-[#212e5b]">
      <div className={`${container} flex h-[100px] items-center justify-between`}>
        <a href="#home">
          <Logo />
        </a>
        <nav className="flex items-center pr-px pb-0.5 text-[15px] text-white">
          <a href="#app" className="flex items-center gap-[13px]">
            <PhoneDeviceIcon />
            Download App
          </a>
          <a href="#sell" className="ml-10 flex items-center gap-[11px]">
            <BuildingIcon />
            <span>
              Sell/Rent Property <sup className="text-[13px] text-[#ff7e00] italic">Free</sup>
            </span>
          </a>
          <a href="#login" className="ml-[25px] flex items-center gap-[11px]">
            <UserIcon />
            Login
          </a>
          <button type="button" aria-label="Open menu" className="ml-9 flex w-[22px] flex-col gap-[3px]">
            <span className="h-1 w-full bg-white" />
            <span className="h-1 w-full bg-white" />
            <span className="h-1 w-full bg-white" />
          </button>
        </nav>
      </div>
    </header>
  );
}

function ContactInfo() {
  return (
    <section className="mt-[63px] flex items-start border-b border-[#d0d0d0] pb-[71px] text-center text-lg font-light">
      <div className="flex flex-1 flex-col items-center">
        <PinIcon />
        <h2 className="mt-[23px] text-2xl leading-[34px] text-[#008bcb]">Hantida Estate</h2>
        <address className="leading-[30px] not-italic">
          0024 Wilsonia Neck Drive
          <br />
          P.O. Box 1, Machipongo VA 23405
        </address>
      </div>
      <div className="flex h-[161px] w-[390px] flex-col items-center border-x border-[#d0d0d0] pr-[15px]">
        <HandsetIcon />
        <p className="mt-5 leading-[33px]">TEL: +718.684.0000</p>
        <p className="leading-[33px]">FAX: +718.684.0000</p>
      </div>
      <div className="flex flex-1 flex-col items-center pt-px pr-1">
        <EnvelopeIcon />
        <div className="mt-[26px] flex flex-col pr-9 leading-[31px]">
          <a href="mailto:info@hantidaestate.com">info@hantidaestate.com</a>
          <a href="mailto:customer.service@hantidaestate.com">customer.service@hantidaestate.com</a>
        </div>
      </div>
    </section>
  );
}

const fieldClass =
  'w-full rounded-[5px] border border-[#b4b4b4] bg-white px-[19px] text-[15px] font-light text-[#333] outline-none placeholder:text-[#333] focus:border-[#008bcb]';

function Field({ label, name, type = 'text' }: { label: string; name: string; type?: string }) {
  return (
    <input
      type={type}
      name={name}
      aria-label={label}
      placeholder={label}
      className={`${fieldClass} h-[50px] pt-0.5`}
    />
  );
}

function ContactForm() {
  const handleSubmit = (event: FormEvent) => event.preventDefault();

  return (
    <section className="pt-[73px] pb-20">
      <div className="text-center">
        <h1 className="pr-2 text-3xl leading-9">FEEL FREE TO COMMUNICATE WITH US</h1>
        <p className="mx-auto mt-[15px] max-w-[720px] text-lg leading-[22px] font-light">
          Lorem ipsum dolor sit amet, consectetur adipiscing elit. Vivamus eget risus tincidunt odio
          accumsan faucibus at
        </p>
      </div>
      <form onSubmit={handleSubmit} className="mt-11">
        <div className="grid grid-cols-2 gap-x-[30px] gap-y-[29px]">
          <Field label="Name*" name="name" />
          <Field label="Email*" name="email" type="email" />
          <Field label="Phone" name="phone" type="tel" />
          <Field label="Subject" name="subject" />
          <textarea
            name="message"
            aria-label="Message*"
            placeholder="Message*"
            className={`${fieldClass} col-span-2 h-[100px] resize-none py-[14px]`}
          />
        </div>
        <button
          type="submit"
          className="mx-auto mt-[30px] block h-[50px] w-[190px] rounded-[5px] bg-[#008bcb] text-xl text-white"
        >
          SUBMIT
        </button>
      </form>
    </section>
  );
}

function MapLayer({ children, tile }: { children: ReactNode; tile: number }) {
  return <g transform={`translate(${tile * TILE} 0)`}>{children}</g>;
}

function Shield({ label }: { label: string }) {
  const wide = label.length > 2;
  const width = wide ? 24 : 17;
  return (
    <svg width={width} height="18" viewBox={`0 0 ${width} 18`}>
      <path
        d={
          wide
            ? 'M1 4 H23 C25 10 22 15 12 18 C2 15 -1 10 1 4Z'
            : 'M1 4 H16 C18 10 15 15 8.500 18 C2 15 -1 10 1 4Z'
        }
        fill="#3f78c8"
      />
      <path
        d={wide ? 'M1 0 L4 1 L8 0 L12 1 L16 0 L20 1 L23 0 V3 H1Z' : 'M1 0 L3 1 L6 0 L8.500 1 L11 0 L14 1 L16 0 V3 H1Z'}
        fill="#d9605b"
      />
      {label && (
        <text x={width / 2} y="13" textAnchor="middle" fontSize="9" fontWeight="700" fill="#fff">
          {label}
        </text>
      )}
    </svg>
  );
}

function RegionMap() {
  return (
    <section
      aria-label="Map"
      className="relative h-[458px] overflow-hidden border border-[#b4b4b4] bg-[#f3f1ed]"
    >
      <svg
        className="block h-full w-full"
        viewBox={`0 ${MAP_TOP} ${MAP_WIDTH} ${MAP_HEIGHT}`}
        preserveAspectRatio="none"
        fill="none"
        strokeLinejoin="round"
        aria-hidden="true"
      >
        <defs>
          {/* relief shading of the western mountains */}
          <filter id="relief" x="0" y="0" width="100%" height="100%">
            <feTurbulence type="fractalNoise" baseFrequency="0.025" numOctaves="3" seed="4" />
            <feDiffuseLighting surfaceScale="14" lightingColor="#fff">
              <feDistantLight azimuth="225" elevation="60" />
            </feDiffuseLighting>
          </filter>
          <linearGradient id="fade" x1="0" x2="1" y1="0" y2="0">
            <stop offset="0.7" stopColor="#fff" />
            <stop offset="1" stopColor="#000" />
          </linearGradient>
          <mask id="west">
            <rect x="0" y="0" width="1300" height="1400" fill="url(#fade)" />
          </mask>
        </defs>
        {tiles.map((t, i) => (
          <MapLayer key={i} tile={i}>
            <path d={t.tan} fill="#ebe6df" />
            <path d={t.pale} fill="#e3ebd3" />
            <path d={t.green} fill="#cae6a3" />
          </MapLayer>
        ))}
        <g mask="url(#west)" className="opacity-15 mix-blend-multiply">
          <rect x="0" y="0" width="1300" height="1400" filter="url(#relief)" />
        </g>
        {tiles.map((t, i) => (
          <MapLayer key={i} tile={i}>
            <path d={t.lakes} fill="#a3ccff" />
            <path d={t.water} stroke="#a3ccff" strokeWidth="1.500" vectorEffect="non-scaling-stroke" />
            <path d={t.faint} stroke="#f5e3c3" strokeWidth="1" vectorEffect="non-scaling-stroke" />
            <path d={t.roads} stroke="#ecd28f" strokeWidth="1.300" vectorEffect="non-scaling-stroke" />
          </MapLayer>
        ))}
        <MapLayer tile={2}>
          <path d={river} stroke="#a9c3e6" strokeWidth="2" vectorEffect="non-scaling-stroke" />
        </MapLayer>
        {tiles.map((t, i) => (
          <MapLayer key={i} tile={i}>
            <path d={t.highways} stroke="#f6bf80" strokeWidth="3" vectorEffect="non-scaling-stroke" />
            <path d={t.highways} stroke="#ffd3a0" strokeWidth="1.500" vectorEffect="non-scaling-stroke" />
            <path
              d={t.borders}
              stroke="#a9a8a6"
              strokeWidth="1"
              strokeDasharray="10 4"
              vectorEffect="non-scaling-stroke"
            />
          </MapLayer>
        ))}
      </svg>
      {townDots.map(([tile, x, y]) => (
        <span
          key={`${tile}-${x}-${y}`}
          className="absolute size-[5px] -translate-1/2 rounded-full border border-[#555] bg-white"
          style={place(tile, x, y)}
        />
      ))}
      {shields.map(([tile, x, y, route]) => (
        <span key={`${tile}-${x}-${y}`} className="absolute -translate-1/2" style={place(tile, x, y)}>
          <Shield label={route} />
        </span>
      ))}
      {labels.map(([kind, tile, x, y, text]) => (
        <span
          key={`${tile}-${x}-${y}`}
          className={`absolute -translate-1/2 leading-none whitespace-nowrap ${labelStyles[kind]}`}
          style={place(tile, x, y)}
        >
          {text}
        </span>
      ))}
    </section>
  );
}

function Newsletter() {
  const [email, setEmail] = useState('');

  return (
    <section className="border-b border-white bg-[#a8d046]">
      <form
        onSubmit={(event) => event.preventDefault()}
        className={`${container} flex h-[100px] items-center justify-between`}
      >
        <label htmlFor="newsletter-email" className="pt-0.5 text-2xl font-light text-white">
          SUBSCRIBE TO OUR NEWSLETTER
        </label>
        <div className="mb-0.5 flex h-[41px] w-[742px]">
          <input
            id="newsletter-email"
            type="email"
            value={email}
            onChange={(event) => setEmail(event.target.value)}
            placeholder="Enter your email"
            className="min-w-0 flex-1 rounded-l-[5px] bg-white px-[13px] text-[15px] font-light outline-none placeholder:text-[#a9a9a9]"
          />
          <button
            type="submit"
            className="w-[146px] rounded-r-[5px] bg-[#779f16] text-[15px] font-medium text-white"
          >
            SUBSCRIBE
          </button>
        </div>
      </form>
    </section>
  );
}

const footerTitleClass = 'border-b border-[#9a9a9a] text-lg leading-6 font-medium';

const socialClass =
  'flex size-[41px] items-center justify-center rounded-full border border-[#3a3a3a]';

function Footer() {
  return (
    <footer>
      <div className="bg-[#e8e8e8] pt-[35px] pb-[30px]">
        <div className={`${container} grid grid-cols-4 gap-[30px]`}>
          {footerColumns.map((column) => (
            <div key={column.title}>
              <h3 className={`${footerTitleClass} pb-[14px]`}>{column.title}</h3>
              <ul className="mt-[9px] font-light">
                {column.links.map((link) => (
                  <li key={link} className="leading-9">
                    <a href="#footer">{link}</a>
                  </li>
                ))}
              </ul>
            </div>
          ))}
          <div>
            <h3 className={`${footerTitleClass} pb-[14px]`}>Mobile</h3>
            <ul className="mt-[9px] mb-[9px] leading-9 font-light">
              <li>
                <a href="#apps">Our Mobile Apps</a>
              </li>
              <li className="pl-4">
                <a href="#android">Android</a>
              </li>
              <li className="pl-4">
                <a href="#iphone">iPhone</a>
              </li>
            </ul>
            <h3 className={`${footerTitleClass} pb-[10px]`}>Follow Us</h3>
            <div className="mt-[15px] flex gap-[11px]">
              <a href="#facebook" aria-label="Facebook" className={socialClass}>
                <FaFacebookF size={21} />
              </a>
              <a href="#twitter" aria-label="Twitter" className={socialClass}>
                <FaTwitter size={24} />
              </a>
              <a href="#google-plus" aria-label="Google Plus" className={socialClass}>
                <GooglePlusIcon />
              </a>
              <a href="#linkedin" aria-label="LinkedIn" className={socialClass}>
                <FaLinkedinIn size={24} />
              </a>
            </div>
          </div>
        </div>
      </div>
      <div className="bg-[#7a7a7a] text-sm font-light text-white">
        <div className={`${container} flex h-[54px] items-center justify-between pb-1`}>
          <ul className="flex">
            {legalLinks.map((link) => (
              <li key={link}>
                <a href="#legal">{link}</a>
                <span className="mx-[7px]">|</span>
              </li>
            ))}
          </ul>
          <p>© 2017 All Rights Reserved</p>
        </div>
      </div>
    </footer>
  );
}

export default function App() {
  return (
    <div className="bg-white font-['Roboto','Liberation_Sans',sans-serif] text-[#333]">
      <Header />
      <main>
        <div className={container}>
          <nav aria-label="Breadcrumb" className="pt-[13px] text-[15px] leading-6 text-[#8f8f8f]">
            <a href="#home" className="text-[#222]">
              Home
            </a>{' '}
            / Contact Us
          </nav>
          <ContactInfo />
          <ContactForm />
        </div>
        <RegionMap />
        <Newsletter />
      </main>
      <Footer />
    </div>
  );
}
